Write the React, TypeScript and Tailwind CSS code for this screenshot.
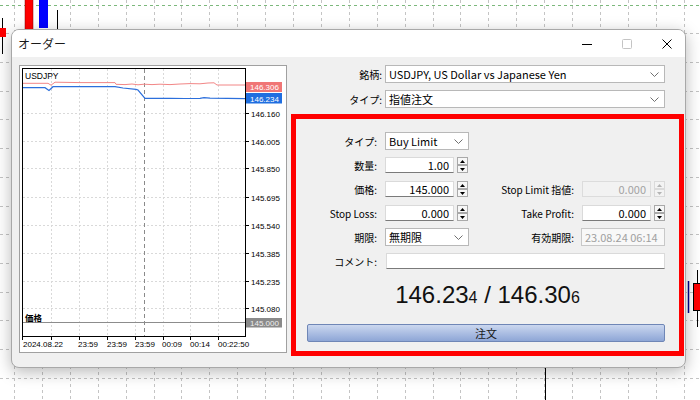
import React from "react";

function Background() {
  const xs = Array.from({ length: 26 }, (_, i) => Math.round(14 + i * 27.9) + 0.5);
  const ys = Array.from({ length: 14 }, (_, i) => Math.round(4.6 + i * 28.7) + 0.5);
  return (
    <svg width="700" height="400" className="absolute left-0 top-0">
      <rect x="0" y="0" width="700" height="400" fill="#ffffff" />
      {xs.map((x, i) => (
        <line key={"v" + i} x1={x} y1={0} x2={x} y2={400} stroke="#c4c4c4" strokeDasharray="3 3" />
      ))}
      {ys.map((y, i) => (
        <line key={"h" + i} x1={0} y1={y} x2={700} y2={y} stroke={i === 0 ? "#7cb87c" : "#c4c4c4"} strokeDasharray="3 3" />
      ))}
      <line x1={2.5} y1={18} x2={2.5} y2={54} stroke="#000" />
      <rect x={0} y={28} width={6} height={9} fill="#ff0000" />
      <rect x={25} y={-2} width={8} height={32} fill="#ff0000" stroke="#800000" strokeWidth="0.5" />
      <rect x={39} y={-2} width={9} height={30} fill="#0000ff" />
      <line x1={57.5} y1={10} x2={57.5} y2={30} stroke="#000" />
      <line x1={688.5} y1={281} x2={688.5} y2={313} stroke="#00008b" strokeWidth="1.5" />
      <line x1={697.5} y1={270} x2={697.5} y2={327} stroke="#000" />
      <rect x={693.5} y={283.5} width={8} height={27} fill="#ff0000" stroke="#000" />
      <line x1={545.5} y1={360} x2={545.5} y2={400} stroke="#000" />
    </svg>
  );
}

function Chart() {
  const vx = [31, 59, 87, 115, 143, 170, 198];
  const hy = [47, 75, 102, 131, 159, 187, 215, 242];
  const labels: [string, number][] = [
    ["146.160", 47],
    ["146.005", 75],
    ["145.850", 102],
    ["145.695", 131],
    ["145.540", 159],
    ["145.385", 187],
    ["145.235", 215],
    ["145.080", 242],
  ];
  const dates: [string, number][] = [
    ["2024.08.22", 3],
    ["23:59", 58],
    ["23:59", 87],
    ["23:59", 115],
    ["00:09", 142],
    ["00:14", 170],
    ["00:22:50", 198],
  ];
  const red =
    "3,17.3 28,17.3 31,19.2 35,16.2 60,16.6 95,16.6 96,18.3 105,18.6 112,18 118,18.8 124,18.2 132,18.6 140,18.2 150,18.6 160,18 170,17.6 180,17.8 188,17 194,16.8 197,19 225,19";
  const blue =
    "3,21.7 25,21.7 29,24.5 33,20.7 95,20.7 103,22 116,23.4 118,24 125,32.3 150,32.3 165,32.5 180,32.3 184,31.6 190,32.2 225,32.6";
  return (
    <svg width="266" height="286" className="block font-['Liberation_Sans',Arial,sans-serif]">
      <rect x="0" y="0" width="266" height="286" fill="#ffffff" />
      {vx.map((x, i) => (
        <line key={"gv" + i} x1={x + 0.5} y1={3} x2={x + 0.5} y2={270} stroke="#d9d9d9" strokeDasharray="2 2" />
      ))}
      {hy.map((y, i) => (
        <line key={"gh" + i} x1={3} y1={y + 0.5} x2={225} y2={y + 0.5} stroke="#d9d9d9" strokeDasharray="2 2" />
      ))}
      <line x1={124.5} y1={3} x2={124.5} y2={270} stroke="#8a8a8a" strokeDasharray="4 3" />
      <line x1={3} y1={256.5} x2={225} y2={256.5} stroke="#8c8c8c" />
      <polyline points={red} fill="none" stroke="#f28686" strokeWidth="1" />
      <polyline points={blue} fill="none" stroke="#2c6fdc" strokeWidth="1.2" />
      <rect x="2.5" y="2.5" width="223" height="268" fill="none" stroke="#000" />
      <text x="5" y="13" fontSize="8.5" fill="#000">USDJPY</text>
      <text x="5" y="254.5" fontSize="8.5" fontWeight="bold" fill="#000" className="font-['Noto_Sans_CJK_JP',sans-serif]">
        価格
      </text>
      <rect x="226" y="16" width="36" height="10" fill="#f07676" />
      <text x="230" y="24" fontSize="8" fill="#ffffff">146.306</text>
      <rect x="226" y="27" width="36" height="10.5" fill="#1f6ee0" />
      <text x="230" y="35.5" fontSize="8" fill="#ffffff">146.234</text>
      <rect x="226" y="252" width="36" height="9.5" fill="#8a8a8a" />
      <text x="230" y="260" fontSize="8" fill="#eeeeee">145.000</text>
      {labels.map(([t, y], i) => (
        <g key={"l" + i}>
          <line x1={226} y1={y + 0.5} x2={229} y2={y + 0.5} stroke="#000" />
          <text x="231" y={y + 3.5} fontSize="8" fill="#000">
            {t}
          </text>
        </g>
      ))}
      {[2, ...vx].map((x, i) => (
        <line key={"t" + i} x1={x + 0.5} y1={271} x2={x + 0.5} y2={274} stroke="#000" />
      ))}
      {dates.map(([t, x], i) => (
        <text key={"d" + i} x={x} y={281} fontSize="8" fill="#000">
          {t}
        </text>
      ))}
    </svg>
  );
}

function Chevron({ c = "#6f6f6f" }: { c?: string }) {
  return (
    <svg width="9" height="5" viewBox="0 0 9 5">
      <path d="M0.5 0.5 L4.5 4.5 L8.5 0.5" fill="none" stroke={c} strokeWidth="1" />
    </svg>
  );
}

function Spinner({ disabled }: { disabled?: boolean }) {
  const b = disabled ? "border-[#dadada] bg-[#f3f3f3]" : "border-[#a9a9a9] bg-[#f7f7f7]";
  const t = disabled ? "#b4b4b4" : "#000000";
  return (
    <div className="flex flex-col w-[11px] h-[16px] justify-between">
      <div className={"h-[8px] border flex items-center justify-center " + b}>
        <svg width="5" height="3">
          <path d="M0 3 L2.5 0 L5 3Z" fill={t} />
        </svg>
      </div>
      <div className={"h-[8px] border flex items-center justify-center " + b}>
        <svg width="5" height="3">
          <path d="M0 0 L2.5 3 L5 0Z" fill={t} />
        </svg>
      </div>
    </div>
  );
}

function NumInput({ value, disabled }: { value: string; disabled?: boolean }) {
  return (
    <div className="flex items-center gap-[3px]">
      <div
        className={
          "h-[16px] w-[69px] border flex items-center justify-end pr-[4px] " +
          (disabled
            ? "border-[#dcdcdc] bg-[#f2f2f2] text-[#a3a3a3]"
            : "border-[#dadada] border-b-[#7a7a7a] bg-white text-black")
        }
      >
        {value}
      </div>
      <Spinner disabled={disabled} />
    </div>
  );
}

function Select({ value, w, disabled }: { value: string; w: string; disabled?: boolean }) {
  return (
    <div
      className={
        "h-[18px] border flex items-center justify-between pl-[3px] pr-[5px] " +
        w +
        " " +
        (disabled ? "border-[#c8c8c8] bg-[#f8f8f8] text-[#a0a0a0]" : "border-[#b8b8b8] bg-white text-black")
      }
    >
      <span className="whitespace-nowrap">{value}</span>
      <Chevron c={disabled ? "#c0c0c0" : "#707070"} />
    </div>
  );
}

export default function App() {
  return (
    <div className="relative w-[700px] h-[400px] overflow-hidden bg-white font-['Noto_Sans_CJK_JP','Noto_Sans',sans-serif] text-[11px] text-black">
      <Background />
      <div className="absolute left-[11px] top-[29px] w-[675px] h-[339px] rounded-[8px] border border-[#a8a8a8] bg-[#f0f0f0] overflow-hidden shadow-[0_4px_16px_rgba(0,0,0,0.28)] flex flex-col">
        <div className="h-[27px] bg-white flex items-center pl-[6px] shrink-0">
          <span className="text-[12px] text-[#1a1a1a]">オーダー</span>
          <div className="ml-auto mr-[13px] flex items-center gap-[30px]">
            <svg width="10" height="10">
              <line x1="0" y1="5.5" x2="10" y2="5.5" stroke="#000" />
            </svg>
            <svg width="10" height="10">
              <rect x="0.5" y="0.5" width="9" height="9" rx="1" fill="none" stroke="#c4c4c4" />
            </svg>
            <svg width="10" height="10">
              <path d="M0.5 0.5 L9.5 9.5 M9.5 0.5 L0.5 9.5" stroke="#000" strokeWidth="1" />
            </svg>
          </div>
        </div>
        <div className="flex pt-[8px] pl-[7px]">
          <div className="w-[268px] h-[288px] border border-[#a0a0a0] bg-white shrink-0">
            <Chart />
          </div>
          <div className="ml-[4px] w-[393px] flex flex-col">
            <div className="flex items-center h-[18px]">
              <div className="w-[91px] text-right text-[10px]">銘柄:</div>
              <div className="ml-[3px]">
                <Select value="USDJPY, US Dollar vs Japanese Yen" w="w-[280px]" />
              </div>
            </div>
            <div className="flex items-center h-[18px] mt-[7px]">
              <div className="w-[91px] text-right text-[10px]">タイプ:</div>
              <div className="ml-[3px]">
                <Select value="指値注文" w="w-[280px]" />
              </div>
            </div>
            <div className="mt-[6px] h-[242px] border-[5px] border-[#ff0000] flex flex-col pt-[10px]">
              <div className="flex items-center h-[24px] pr-[14px]">
                <div className="w-[81px] text-right text-[10px]">タイプ:</div>
                <div className="ml-[8px] w-[84px]">
                  <Select value="Buy Limit" w="w-[84px]" />
                </div>
              </div>
              <div className="flex items-center h-[24px] pr-[14px]">
                <div className="w-[81px] text-right text-[10px]">数量:</div>
                <div className="ml-[8px] w-[84px]">
                  <NumInput value="1.00" />
                </div>
              </div>
              <div className="flex items-center h-[24px] pr-[14px]">
                <div className="w-[81px] text-right text-[10px]">価格:</div>
                <div className="ml-[8px] w-[84px]">
                  <NumInput value="145.000" />
                </div>
                <div className="flex-1 text-right text-[10px]">Stop Limit 指値:</div>
                <div className="ml-[8px] w-[83px]">
                  <NumInput value="0.000" disabled />
                </div>
              </div>
              <div className="flex items-center h-[24px] pr-[14px]">
                <div className="w-[81px] text-right text-[10px]">Stop Loss:</div>
                <div className="ml-[8px] w-[84px]">
                  <NumInput value="0.000" />
                </div>
                <div className="flex-1 text-right text-[10px]">Take Profit:</div>
                <div className="ml-[8px] w-[83px]">
                  <NumInput value="0.000" />
                </div>
              </div>
              <div className="flex items-center h-[24px] pr-[14px]">
                <div className="w-[81px] text-right text-[10px]">期限:</div>
                <div className="ml-[8px] w-[84px]">
                  <Select value="無期限" w="w-[84px]" />
                </div>
                <div className="flex-1 text-right text-[10px]">有効期限:</div>
                <div className="ml-[7px] w-[84px]">
                  <Select value="23.08.24 06:14" w="w-[84px]" disabled />
                </div>
              </div>
              <div className="flex items-center h-[24px] pr-[14px]">
                <div className="w-[81px] text-right text-[10px]">コメント:</div>
                <div className="ml-[9px] flex-1 h-[16px] border border-[#dadada] border-b-[#7a7a7a] bg-white" />
              </div>
              <div className="h-[44px] leading-[44px] text-center text-[#111] font-['Liberation_Sans',Arial,sans-serif] whitespace-nowrap">
                <span className="text-[24px]">146.23</span>
                <span className="text-[16px]">4</span>
                <span className="text-[24px]"> / 146.30</span>
                <span className="text-[16px]">6</span>
              </div>
              <div className="mt-[7px] ml-[11px] mr-[14px] h-[18px] rounded-[2px] border border-[#6f86b6] bg-gradient-to-b from-[#cbd7ef] to-[#8ea6d6] flex items-center justify-center text-[#1a1a1a]">
                注文
              </div>
            </div>
          </div>
        </div>
      </div>
    </div>
  );
}
